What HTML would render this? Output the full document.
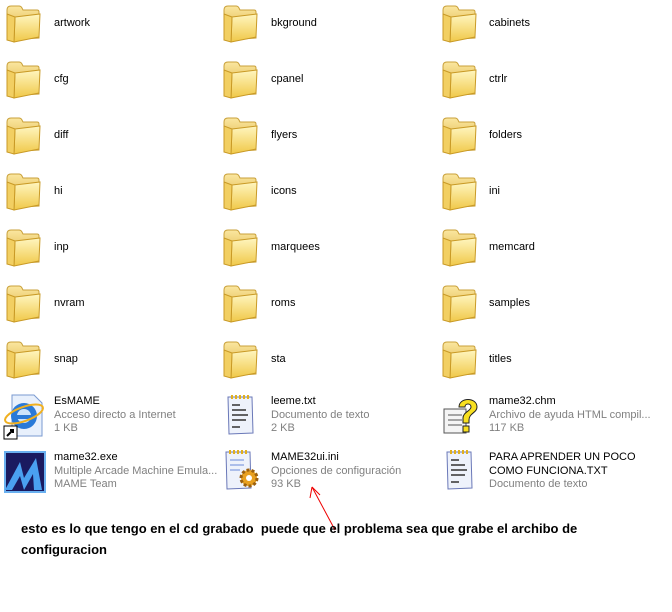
<html><head><style>
body{margin:0;width:672px;height:612px;background:#fff;position:relative;overflow:hidden;font-family:Tahoma,"DejaVu Sans","Liberation Sans",sans-serif;font-size:11px;}
.f{position:absolute;width:38px;height:40px}
.l{position:absolute;color:#000;font-family:"Liberation Sans",sans-serif;font-size:11px;line-height:13.5px;white-space:nowrap}
.g{color:#808080}
.i{position:absolute}
.b{position:absolute;left:21px;font-family:"Liberation Sans",sans-serif;font-weight:bold;font-size:13px;white-space:pre;color:#000}
</style></head><body>
<svg width="0" height="0" style="position:absolute"><defs>
<linearGradient id="fg" x1="0" y1="0" x2="0" y2="1"><stop offset="0" stop-color="#fff6c0"/><stop offset="1" stop-color="#f0c848"/></linearGradient>
<linearGradient id="bg" x1="0" y1="0" x2="0" y2="1"><stop offset="0" stop-color="#fbe7a0"/><stop offset="1" stop-color="#d8a830"/></linearGradient>
<symbol id="fold" viewBox="0 0 38 40"><path d="M3 6 Q3 2 7 2 L15 2 Q17 2 18 4 L19 6 L33 6 Q35 6 35 8 L35 34 L3 36 Z" fill="url(#bg)" stroke="#c9a03a"/><path d="M11 13 L36 10 L35 33 L10 38 Z" fill="url(#fg)" stroke="#c99a26"/><path d="M3 36 L10 38 L11 13 L3 10Z" fill="#f2cf62" stroke="#c99a26"/></symbol>
<symbol id="txt" viewBox="0 0 36 44"><path d="M6 4 L30 4 L31 40 L7 41 Z" fill="#eef2fb" stroke="#6a78b8"/><g stroke="#e0b020" stroke-width="2"><path d="M10 2v4M14 2v4M18 2v4M22 2v4M26 2v4"/></g><g stroke="#333" stroke-width="1.5"><path d="M10 12h8M10 17h14M10 22h16M10 27h14M10 34h8"/></g></symbol>
</defs></svg>
<div id="c"></div>
<script>
var cols=[[4,54],[221,271],[440,489]];
var names=[["artwork","bkground","cabinets"],["cfg","cpanel","ctrlr"],["diff","flyers","folders"],["hi","icons","ini"],["inp","marquees","memcard"],["nvram","roms","samples"],["snap","sta","titles"]];
var h="";
for(var r=0;r<7;r++){for(var c=0;c<3;c++){var y=r*56;
h+='<svg class="f" style="left:'+cols[c][0]+'px;top:'+(y+4)+'px" viewBox="0 0 38 40"><use href="#fold"/></svg>';
h+='<div class="l" style="left:'+cols[c][1]+'px;top:'+(y+17)+'px">'+names[r][c]+'</div>';}}
document.getElementById('c').innerHTML=h;
</script>
<!-- EsMAME -->
<svg class="i" style="left:2px;top:392px" width="46" height="48" viewBox="0 0 46 48"><path d="M10 3h22l8 8v33H10z" fill="#e8f0fc" stroke="#7a9ad0"/><circle cx="22" cy="24" r="13" fill="#2a7ad8"/><circle cx="22" cy="24" r="7" fill="#cde4fb"/><rect x="13" y="23" width="18" height="4" fill="#2a7ad8"/><ellipse cx="22" cy="22" rx="20" ry="7" fill="none" stroke="#f0b020" stroke-width="2" transform="rotate(-20 22 22)"/><rect x="2" y="34" width="13" height="13" fill="#fff" stroke="#000"/><path d="M5 44l6-6M8 38h3v3" stroke="#000" stroke-width="2" fill="none"/></svg>
<div class="l" style="left:54px;top:395px">EsMAME<br><span class="g">Acceso directo a Internet<br>1 KB</span></div>
<svg class="i" style="left:222px;top:393px" width="36" height="44" viewBox="0 0 36 44"><use href="#txt"/></svg>
<div class="l" style="left:271px;top:395px">leeme.txt<br><span class="g">Documento de texto<br>2 KB</span></div>
<svg class="i" style="left:441px;top:395px" width="40" height="42" viewBox="0 0 40 42"><path d="M3 14h22v24H3z" fill="#f4f4f4" stroke="#555"/><path d="M7 20h14M7 25h14M7 30h14" stroke="#555"/><path d="M18 12c0-10 18-10 18 0 0 6-8 6-8 13v3h-6v-5c0-6 8-7 8-11 0-4-6-4-6 0z" fill="#f8e020" stroke="#222"/><rect x="22" y="31" width="6" height="6" fill="#f8e020" stroke="#222"/></svg>
<div class="l" style="left:489px;top:395px">mame32.chm<br><span class="g">Archivo de ayuda HTML compil...<br>117 KB</span></div>
<svg class="i" style="left:2px;top:450px" width="46" height="44" viewBox="0 0 46 44"><rect x="3" y="2" width="40" height="40" fill="#1a1a60" stroke="#6ab0f0" stroke-width="2"/><path d="M3 40 L18 12 L22 28 L34 8 L40 40 L32 40 L31 24 L22 40 L18 26 L10 40Z" fill="#4aa0f0"/></svg>
<div class="l" style="left:54px;top:451px">mame32.exe<br><span class="g">Multiple Arcade Machine Emula...<br>MAME Team</span></div>
<svg class="i" style="left:220px;top:448px" width="40" height="46" viewBox="0 0 40 46"><path d="M6 4h24l1 36-24 1z" fill="#eef2fb" stroke="#6a78b8"/><g stroke="#e0b020" stroke-width="2"><path d="M10 2v4M14 2v4M18 2v4M22 2v4M26 2v4"/></g><path d="M10 12h14M10 17h14M10 22h10" stroke="#6a8ad8"/><circle cx="29" cy="30" r="8" fill="#e8a020" stroke="#9a6010" stroke-width="3" stroke-dasharray="3 2"/><circle cx="29" cy="30" r="3" fill="#fff"/></svg>
<div class="l" style="left:271px;top:451px">MAME32ui.ini<br><span class="g">Opciones de configuración<br>93 KB</span></div>
<svg class="i" style="left:441px;top:448px" width="36" height="44" viewBox="0 0 36 44"><use href="#txt"/></svg>
<div class="l" style="left:489px;top:451px">PARA APRENDER UN POCO<br>COMO FUNCIONA.TXT<br><span class="g">Documento de texto</span></div>
<svg class="i" style="left:300px;top:480px" width="50" height="55"><path d="M35 50 L12 7" stroke="#e00" fill="none"/><path d="M12 7 L10 18 M12 7 L20 15" stroke="#e00" fill="none"/></svg>
<div class="b" style="top:521px">esto es lo que tengo en el cd grabado  puede que el problema sea que grabe el archibo de</div>
<div class="b" style="top:542px">configuracion</div>
</body></html>
